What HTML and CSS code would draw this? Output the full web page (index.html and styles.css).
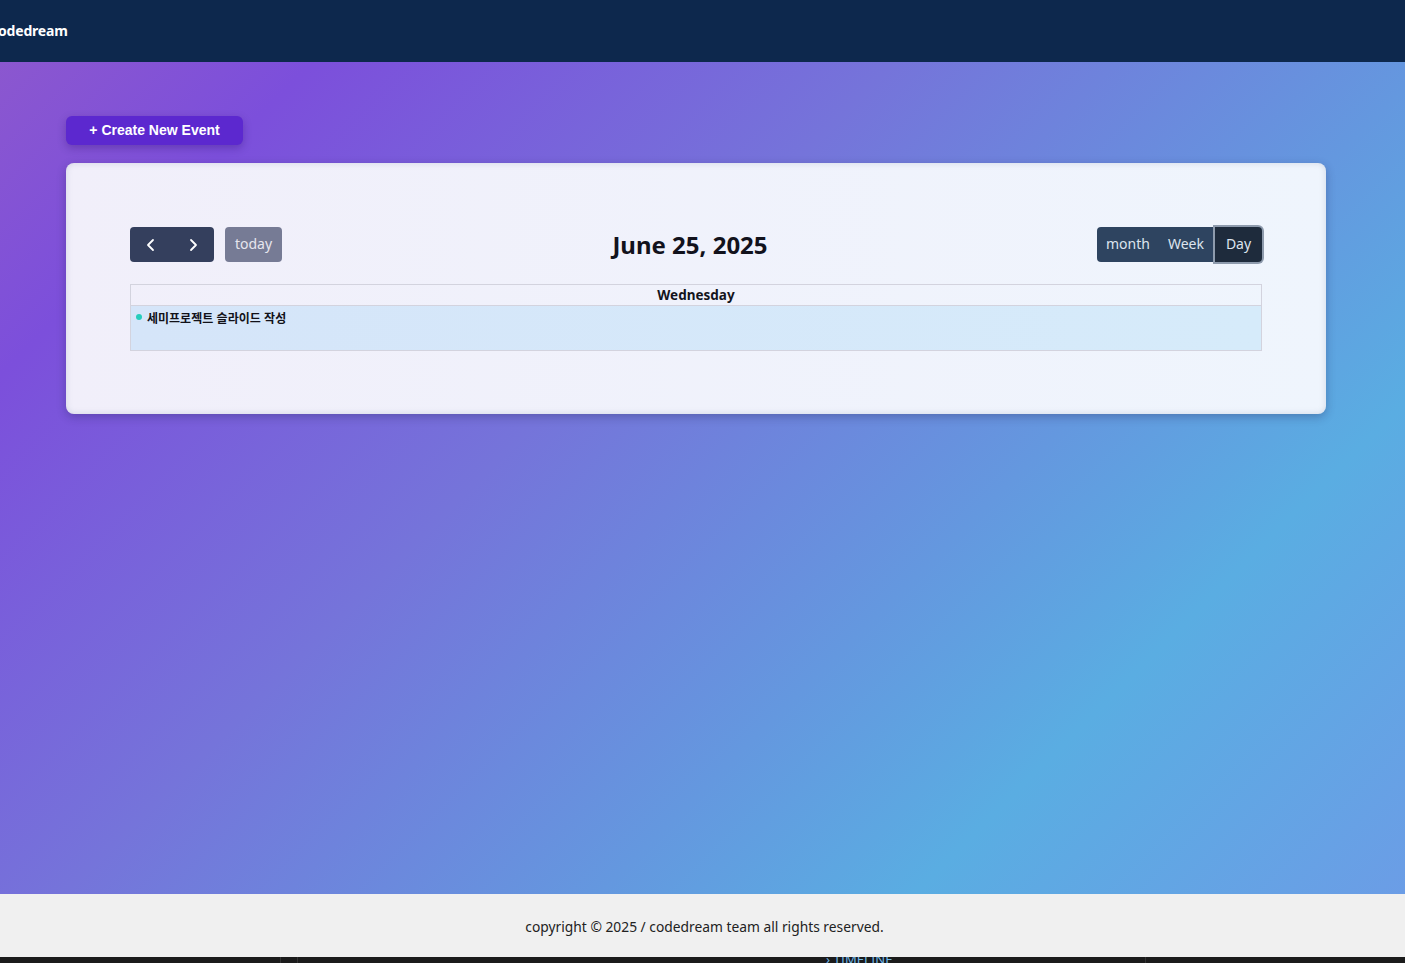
FILE: index.html
```html
<!DOCTYPE html>
<html lang="ko">
<head>
<meta charset="utf-8">
<title>codedream calendar</title>
<link rel="stylesheet" href="styles.css">
</head>
<body>
<header class="topbar">
  <div class="logo">codedream</div>
</header>
<main class="main">
  <button class="create-btn">+ Create New Event</button>
  <section class="card">
    <div class="toolbar">
      <div class="toolbar-left">
        <div class="btn-group">
          <button class="cal-btn icon-btn" aria-label="prev">
            <svg width="12" height="14" viewBox="0 0 12 14"><path d="M8 2 L3 7 L8 12" fill="none" stroke="#ffffff" stroke-width="1.8" stroke-linecap="round" stroke-linejoin="round"/></svg>
          </button>
          <button class="cal-btn icon-btn" aria-label="next">
            <svg width="12" height="14" viewBox="0 0 12 14"><path d="M4 2 L9 7 L4 12" fill="none" stroke="#ffffff" stroke-width="1.8" stroke-linecap="round" stroke-linejoin="round"/></svg>
          </button>
        </div>
        <button class="cal-btn today-btn">today</button>
      </div>
      <h2 class="title">June 25, 2025</h2>
      <div class="toolbar-right">
        <div class="btn-group view-group">
          <button class="cal-btn view-btn">month</button>
          <button class="cal-btn view-btn">Week</button>
          <button class="cal-btn view-btn active">Day</button>
        </div>
      </div>
    </div>
    <div class="day-table">
      <div class="day-head">Wednesday</div>
      <div class="day-body">
        <div class="event"><span class="dot"></span><span class="event-title">세미프로젝트 슬라이드 작성</span></div>
      </div>
    </div>
  </section>
</main>
<footer class="footer">copyright © 2025 / codedream team all rights reserved.</footer>
<div class="strip">
  <span class="seg seg1"></span>
  <span class="seg seg2"></span>
  <span class="strip-label">› TIMELINE</span>
  <span class="seg seg3"></span>
</div>
</body>
</html>
```

FILE: styles.css
```css
* { box-sizing: border-box; }
html, body { margin: 0; padding: 0; }
body {
  height: 963px;
  display: flex;
  flex-direction: column;
  font-family: "Noto Sans", "Noto Sans CJK KR", sans-serif;
  overflow: hidden;
}
.topbar {
  height: 62px;
  flex: 0 0 62px;
  background: #0d284d;
  display: flex;
  align-items: center;
}
.logo {
  margin-left: -9px;
  color: #ffffff;
  font-weight: 700;
  font-size: 14px;
  letter-spacing: -0.2px;
  margin-top: -1px;
}
.main {
  flex: 1 1 auto;
  background: linear-gradient(135deg, #8b57cf 0%, #7c4fdb 14%, #7574da 40%, #5aade2 78%, #6b9de6 100%);
  padding: 54px 0 0 66px;
  display: flex;
  flex-direction: column;
  align-items: flex-start;
}
.create-btn {
  height: 29px;
  width: 177px;
  border: none;
  border-radius: 6px;
  background: #5c28cf;
  color: #ffffff;
  font-family: "Liberation Sans", Arial, sans-serif;
  font-weight: 700;
  font-size: 14px;
  box-shadow: 0 3px 8px rgba(40, 10, 100, 0.3);
  padding: 0 0 1px 0;
}
.card {
  margin-top: 18px;
  width: 1260px;
  height: 251px;
  border-radius: 8px;
  background: linear-gradient(90deg, #f1effa 0%, #eff5fd 100%);
  box-shadow: 0 3px 10px rgba(30, 30, 80, 0.3), inset 0 0 6px rgba(120, 130, 160, 0.25);
  padding: 64px;
}
.toolbar {
  display: flex;
  align-items: center;
  justify-content: space-between;
  height: 35px;
  margin-bottom: 22px;
}
.toolbar-left, .toolbar-right {
  display: flex;
  align-items: center;
  gap: 11px;
  width: 300px;
}
.toolbar-right { justify-content: flex-end; }
.btn-group {
  display: flex;
  border-radius: 4px;
}
.cal-btn {
  border: none;
  height: 35px;
  font-family: "Noto Sans", sans-serif;
  font-size: 14px;
  padding: 0 0 2px 0;
}
.icon-btn {
  width: 42px;
  background: #343f5d;
  display: flex;
  align-items: center;
  justify-content: center;
  padding: 0;
}
.icon-btn:first-child { border-radius: 4px 0 0 4px; }
.icon-btn:last-child { border-radius: 0 4px 4px 0; }
.today-btn {
  width: 57px;
  background: #767b95;
  color: #e6e6ee;
  border-radius: 4px;
}
.title {
  margin: 0 0 0 -12px;
  font-size: 24px;
  font-weight: 700;
  color: #12121c;
}
.view-btn {
  background: #2e4460;
  color: #dde4ee;
}
.view-btn:nth-child(1) { width: 60px; border-radius: 4px 0 0 4px; padding-left: 2px; }
.view-btn:nth-child(2) { width: 58px; }
.view-btn.active {
  width: 47px;
  background: #1e2b3c;
  border-radius: 0 4px 4px 0;
  box-shadow: 0 0 0 2px #8e9bad;
  position: relative;
}
.day-table {
  border: 1px solid #d3d3de;
}
.day-head {
  height: 21px;
  border-bottom: 1px solid #d3d3de;
  text-align: center;
  font-size: 13.5px;
  font-weight: 700;
  line-height: 20px;
  color: #14141c;
}
.day-body {
  height: 44px;
  background: linear-gradient(90deg, #d5e5f9 0%, #d6ebfa 100%);
  padding: 3px 5px;
}
.event {
  display: flex;
  align-items: center;
  gap: 5px;
  height: 16px;
}
.dot {
  width: 6px;
  height: 6px;
  border-radius: 50%;
  background: #26cdbc;
}
.event-title {
  font-size: 12px;
  font-weight: 700;
  color: #111118;
  font-family: "Noto Sans CJK KR", "Noto Sans", sans-serif;
}
.footer {
  flex: 0 0 63px;
  height: 63px;
  background: #f0f0f0;
  display: flex;
  align-items: center;
  justify-content: center;
  font-size: 13.8px;
  color: #222222;
  padding-left: 4px;
  padding-top: 2px;
}
.strip {
  flex: 0 0 6px;
  height: 6px;
  background: #1b1b1b;
  position: relative;
  overflow: hidden;
}
.seg {
  position: absolute;
  top: 0;
  width: 1px;
  height: 6px;
  background: #333333;
}
.seg1 { left: 280px; }
.seg2 { left: 297px; }
.seg3 { left: 1145px; }
.strip-label {
  position: absolute;
  left: 826px;
  top: -6px;
  font-size: 13px;
  color: #6fb8e8;
  font-family: "Noto Sans", sans-serif;
  line-height: 16px;
}
```
